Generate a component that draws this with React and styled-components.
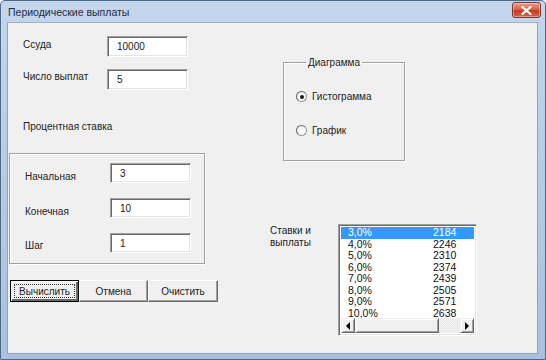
import React from 'react'
import styled, { createGlobalStyle } from 'styled-components'

const Global = createGlobalStyle`
  html, body {
    margin: 0;
    padding: 0;
    background: #ffffff;
  }
  body {
    font-family: 'Liberation Sans', Arial, sans-serif;
    font-size: 10px;
    color: #222;
  }
`

const Window = styled.div`
  width: 546px;
  height: 360px;
  box-sizing: border-box;
  display: flex;
  flex-direction: column;
  background: linear-gradient(to bottom, #c3d6ec 0%, #b9cde6 40%, #a9c1de 100%);
  border: 1px solid #4d6a88;
  border-radius: 5px 5px 0 0;
  padding: 0 7px 5px 6px;
  overflow: hidden;
`

const TitleBar = styled.div`
  height: 21px;
  display: flex;
  align-items: center;
  justify-content: space-between;
  padding-left: 1px;
  font-size: 10.5px;
  color: #1e2b3c;
`

const CloseButton = styled.div`
  width: 27px;
  height: 14px;
  margin-top: -3px;
  margin-right: -3px;
  border: 1px solid #7a3a34;
  border-radius: 3px;
  background: linear-gradient(to bottom, #eba08c 0%, #d9654c 45%, #c8381c 55%, #d8644a 100%);
  display: flex;
  align-items: center;
  justify-content: center;
  box-shadow: inset 0 0 0 1px rgba(255, 255, 255, 0.35);
`

const Client = styled.div`
  flex: 1;
  display: flex;
  background: #f0f0f0;
  border: 1px solid #8ea3bc;
  border-top-color: #9fb2c8;
`

const LeftPane = styled.div`
  width: 212px;
  display: flex;
  flex-direction: column;
  padding-top: 13px;
`

const Row = styled.div`
  display: flex;
  align-items: center;
  height: ${p => p.h || 21}px;
  margin-bottom: ${p => p.gap || 0}px;
  padding-left: 15px;
`

const Label = styled.div`
  width: ${p => p.w}px;
  margin-top: ${p => (p.shift || 0) * 2}px;
`

const TextBox = styled.div`
  width: 81px;
  height: ${p => p.h || 21}px;
  box-sizing: border-box;
  background: #fff;
  border-top: 1px solid #a0a0a0;
  border-left: 1px solid #a0a0a0;
  border-right: 1px solid #ffffff;
  border-bottom: 1px solid #ffffff;
  box-shadow: inset 1px 1px 0 #696969, inset -1px -1px 0 #e3e3e3;
  padding: 4px 0 0 9px;
  font-size: 10px;
  color: #1a1a1a;
`

const Caption = styled.div`
  padding-left: 15px;
  margin-top: 31px;
  height: 19px;
`

const Frame = styled.div`
  margin: 13px 0 0 1px;
  width: 196px;
  height: 111px;
  box-sizing: border-box;
  border: 1px solid #a0a0a0;
  box-shadow: inset 1px 1px 0 #fff, 1px 1px 0 #fff;
  padding-top: 9px;
  display: flex;
  flex-direction: column;
  gap: 15px;
`

const ButtonRow = styled.div`
  display: flex;
  margin: 16px 0 0 2px;
`

const Button = styled.div`
  width: ${p => p.w}px;
  height: 22px;
  box-sizing: border-box;
  display: flex;
  align-items: center;
  justify-content: center;
  background: #f0f0f0;
  border-top: 1px solid #fff;
  border-left: 1px solid #fff;
  border-right: 1px solid #696969;
  border-bottom: 1px solid #696969;
  box-shadow: inset -1px -1px 0 #a0a0a0;
  position: relative;
  ${p => p.primary && `
    border: 1px solid #000;
    box-shadow: inset 1px 1px 0 #fff, inset -2px -2px 0 #696969;
    &::after {
      content: '';
      position: absolute;
      inset: 3px;
      border: 1px dotted #333;
    }
  `}
`

const RightPane = styled.div`
  flex: 1;
  display: flex;
  flex-direction: column;
`

const GroupBox = styled.fieldset`
  margin: 33px 0 0 63px;
  width: 122px;
  height: 105px;
  box-sizing: border-box;
  border: 1px solid #a0a0a0;
  box-shadow: inset 1px 1px 0 #fff, 1px 1px 0 #fff;
  padding: 21px 0 0 12px;
  display: flex;
  flex-direction: column;
  gap: 21px;
  legend {
    padding: 0 2px;
    margin-left: 10px;
    font-size: 10px;
    line-height: 13px;
  }
`

const Radio = styled.div`
  display: flex;
  align-items: center;
  gap: 5px;
  height: 13px;
`

const RadioCircle = styled.span`
  width: 11px;
  height: 11px;
  border-radius: 50%;
  box-sizing: border-box;
  border: 1px solid #9a9a9a;
  border-top-color: #666;
  border-left-color: #666;
  background: radial-gradient(circle at 60% 60%, #ffffff 0%, #f3f3f3 60%, #d9d9d9 100%);
  display: flex;
  align-items: center;
  justify-content: center;
  &::after {
    content: '';
    width: 4px;
    height: 4px;
    border-radius: 50%;
    background: ${p => p.checked ? '#1a1a1a' : 'transparent'};
  }
`

const ListArea = styled.div`
  display: flex;
  margin: 63px 0 0 50px;
`

const ListLabel = styled.div`
  width: 68px;
  padding-top: 1px;
  line-height: 12px;
`

const ListBox = styled.div`
  width: 139px;
  height: 112px;
  box-sizing: border-box;
  background: #fff;
  border-top: 1px solid #a0a0a0;
  border-left: 1px solid #a0a0a0;
  border-right: 1px solid #fff;
  border-bottom: 1px solid #fff;
  box-shadow: inset 1px 1px 0 #696969, inset -1px -1px 0 #e3e3e3;
  padding: 2px;
  display: flex;
  flex-direction: column;
`

const Items = styled.div`
  flex: 1;
  overflow: hidden;
`

const Item = styled.div`
  display: grid;
  grid-template-columns: 85px 1fr;
  height: 11.5px;
  line-height: 11.5px;
  font-size: 10.5px;
  padding-left: 7px;
  color: ${p => p.selected ? '#fff' : '#111'};
  background: ${p => p.selected ? '#3399ff' : 'transparent'};
`

const HScroll = styled.div`
  height: 15px;
  flex: none;
  display: flex;
  background: repeating-conic-gradient(#f4f4f4 0 25%, #e6e6e6 0 50%) 0 0 / 2px 2px;
`

const ScrollBtn = styled.div`
  width: ${p => p.w || 14}px;
  height: 15px;
  box-sizing: border-box;
  background: #f0f0f0;
  border-top: 1px solid #f0f0f0;
  border-left: 1px solid #f0f0f0;
  border-right: 1px solid #696969;
  border-bottom: 1px solid #696969;
  box-shadow: inset 1px 1px 0 #fff, inset -1px -1px 0 #a0a0a0;
  display: flex;
  align-items: center;
  justify-content: center;
  margin-right: ${p => p.after || 0}px;
`

const Arrow = styled.span`
  width: 0;
  height: 0;
  border-top: 4px solid transparent;
  border-bottom: 4px solid transparent;
  ${p => p.left ? 'border-right: 4px solid #000;' : 'border-left: 4px solid #000;'}
`

const rates = [
  ['3,0%', '2184'],
  ['4,0%', '2246'],
  ['5,0%', '2310'],
  ['6,0%', '2374'],
  ['7,0%', '2439'],
  ['8,0%', '2505'],
  ['9,0%', '2571'],
  ['10,0%', '2638'],
]

const App = () => (
  <>
    <Global />
    <Window>
      <TitleBar>
        <span>Периодические выплаты</span>
        <CloseButton>
          <svg width="11" height="9" viewBox="0 0 11 9">
            <path d="M1.5 1 L9.5 8 M9.5 1 L1.5 8" stroke="#fff" strokeWidth="2.2" strokeLinecap="square" />
          </svg>
        </CloseButton>
      </TitleBar>
      <Client>
        <LeftPane>
          <Row gap={12}>
            <Label w={84} shift={-2}>Ссуда</Label>
            <TextBox>10000</TextBox>
          </Row>
          <Row>
            <Label w={84} shift={-3}>Число выплат</Label>
            <TextBox>5</TextBox>
          </Row>
          <Caption>Процентная ставка</Caption>
          <Frame>
            <Row h={20}>
              <Label w={85} shift={3}>Начальная</Label>
              <TextBox h={20}>3</TextBox>
            </Row>
            <Row h={20}>
              <Label w={85} shift={3}>Конечная</Label>
              <TextBox h={20}>10</TextBox>
            </Row>
            <Row h={20}>
              <Label w={85} shift={2}>Шаг</Label>
              <TextBox h={20}>1</TextBox>
            </Row>
          </Frame>
          <ButtonRow>
            <Button w={69} primary>Вычислить</Button>
            <Button w={69}>Отмена</Button>
            <Button w={70}>Очистить</Button>
          </ButtonRow>
        </LeftPane>
        <RightPane>
          <GroupBox>
            <legend>Диаграмма</legend>
            <Radio>
              <RadioCircle checked />
              <span>Гистограмма</span>
            </Radio>
            <Radio>
              <RadioCircle />
              <span>График</span>
            </Radio>
          </GroupBox>
          <ListArea>
            <ListLabel>
              Ставки и
              <br />
              выплаты
            </ListLabel>
            <ListBox>
              <Items>
                {rates.map(([r, v], i) => (
                  <Item key={r} selected={i === 0}>
                    <span>{r}</span>
                    <span>{v}</span>
                  </Item>
                ))}
              </Items>
              <HScroll>
                <ScrollBtn>
                  <Arrow left />
                </ScrollBtn>
                <ScrollBtn w={88} after={21} />
                <ScrollBtn>
                  <Arrow />
                </ScrollBtn>
              </HScroll>
            </ListBox>
          </ListArea>
        </RightPane>
      </Client>
    </Window>
  </>
)

export default App
